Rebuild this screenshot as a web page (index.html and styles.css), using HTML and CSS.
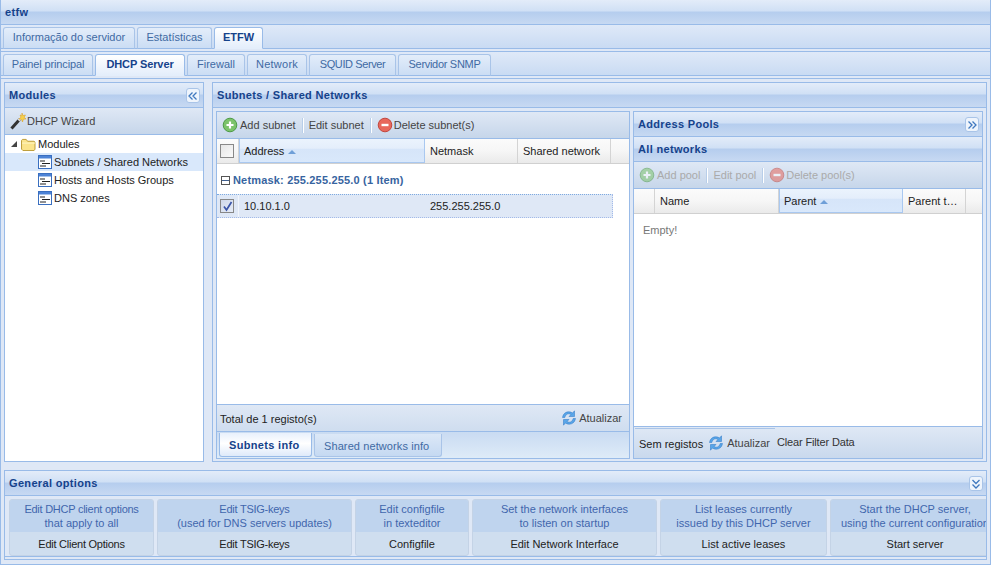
FILE: index.html
```html
<!DOCTYPE html>
<html lang="en">
<head>
    <meta charset="UTF-8">
    <title>etfw</title>
    <link rel="stylesheet" href="styles.css">
</head>
<body>
    <svg class="defs" width="0" height="0">
        <symbol id="i-add" viewBox="0 0 16 16">
            <circle cx="8" cy="8" r="6.8" fill="#7cc36b" stroke="#4e9a48"/>
            <path d="M8 4.500v7M4.500 8h7" stroke="#fff" stroke-width="2.200"/>
        </symbol>
        <symbol id="i-del" viewBox="0 0 16 16">
            <circle cx="8" cy="8" r="6.8" fill="#e8685c" stroke="#c2473e"/>
            <path d="M4.500 8h7" stroke="#fff" stroke-width="2.400"/>
        </symbol>
        <symbol id="i-refresh" viewBox="0 0 16 16">
            <path d="M1.500 7.500C2 3.800 4.800 1.800 7.800 1.800c1.500 0 2.700.4 3.700 1.200L13.500.8V6.500H8l2-2C9.300 4 8.600 3.800 7.800 3.800 5.800 3.800 4.300 5.200 3.800 7.500z" fill="#5aa6e8" stroke="#2a74c4" stroke-width=".5"/>
            <path d="M14.500 8.500c-.5 3.700-3.300 5.700-6.300 5.700-1.500 0-2.700-.4-3.700-1.200L2.500 15.200V9.500H8l-2 2c.7.500 1.400.7 2.200.7 2 0 3.500-1.400 4-3.700z" fill="#5aa6e8" stroke="#2a74c4" stroke-width=".5"/>
        </symbol>
        <symbol id="i-list" viewBox="0 0 14 14">
            <rect x=".5" y=".5" width="13" height="13" fill="#fff" stroke="#3a6fc0"/>
            <rect x="1" y="1" width="12" height="2.500" fill="#4d83d6"/>
            <path d="M2 6h5M4 8.500h8M2 11h6" stroke="#222" stroke-width="1"/>
        </symbol>
    </svg>

    <header class="app-title">etfw</header>

    <nav class="tabs tabs-top">
        <a class="tab t-info">Informação do servidor</a>
        <a class="tab t-stats">Estatísticas</a>
        <a class="tab active t-etfw">ETFW</a>
    </nav>
    <nav class="tabs tabs-sub">
        <a class="tab t-painel">Painel principal</a>
        <a class="tab active t-dhcp">DHCP Server</a>
        <a class="tab t-firewall">Firewall</a>
        <a class="tab t-network">Network</a>
        <a class="tab t-squid">SQUID Server</a>
        <a class="tab t-snmp">Servidor SNMP</a>
    </nav>
    <div class="tab-rule"></div>

    <main class="main">
        <section class="panel modules">
            <div class="panel-title">Modules
                <button class="tool"><svg width="10" height="8" viewBox="0 0 10 8"><path d="M4.500 .5L1 4l3.500 3.500M8.500 .5L5 4l3.500 3.500" fill="none" stroke="#3f78bf" stroke-width="1.300"/></svg></button>
            </div>
            <div class="toolbar wizard">
                <svg width="17" height="18" viewBox="0 0 17 18"><path d="M1.500 16.500L10 7" stroke="#333" stroke-width="3"/><path d="M8.500 8.500L10.500 6.500" stroke="#ddd" stroke-width="3"/><path d="M12 1l.8 2.500L15.500 3l-1.400 2.200L16 7l-2.600.2L12.500 10l-1-2.600L9 7l2-1.800L10 3l1.800.4z" fill="#f7d04a" stroke="#d89a1c" stroke-width=".5"/></svg>
                <span>DHCP Wizard</span>
            </div>
            <ul class="tree">
                <li class="tree-root">
                    <i class="tree-arrow"></i>
                    <svg width="15" height="13" viewBox="0 0 16 14"><path d="M.5 12V2.500l1-1h4l1.500 2h7l1 1V12l-1 1.500h-12z" fill="#fbe48c" stroke="#b8962e"/><path d="M1 5.500h14" stroke="#fff6c8"/></svg>
                    Modules
                </li>
                <li class="selected"><svg width="14" height="14"><use href="#i-list"/></svg>Subnets / Shared Networks</li>
                <li><svg width="14" height="14"><use href="#i-list"/></svg>Hosts and Hosts Groups</li>
                <li><svg width="14" height="14"><use href="#i-list"/></svg>DNS zones</li>
            </ul>
        </section>

        <section class="panel subnets">
            <div class="panel-title">Subnets / Shared Networks</div>
            <div class="subnets-body">
                <div class="inner grid-side">
                    <div class="toolbar">
                        <svg width="16" height="16"><use href="#i-add"/></svg><span>Add subnet</span>
                        <i class="sep"></i><span>Edit subnet</span>
                        <i class="sep"></i>
                        <svg class="del" width="16" height="16"><use href="#i-del"/></svg><span>Delete subnet(s)</span>
                    </div>
                    <div class="grid-head">
                        <div class="col col-check"><i class="check"></i></div>
                        <div class="col col-address sorted">Address <i class="sort"></i></div>
                        <div class="col col-netmask">Netmask</div>
                        <div class="col col-shared">Shared network</div>
                        <div class="col col-rest"></div>
                    </div>
                    <div class="grid-body">
                        <div class="group"><i class="minus"></i>Netmask: 255.255.255.0 (1 Item)</div>
                        <div class="row">
                            <div class="cell col-check"><i class="check checked"><svg width="11" height="11" viewBox="0 0 11 11"><path d="M2 5.500L4.500 9L9.500 1" fill="none" stroke="#3b55a8" stroke-width="1.700"/></svg></i></div>
                            <div class="cell col-address">10.10.1.0</div>
                            <div class="cell col-netmask">255.255.255.0</div>
                        </div>
                    </div>
                    <div class="toolbar grid-foot">
                        <span class="dark total">Total de 1 registo(s)</span>
                        <span class="spring"></span>
                        <svg width="16" height="16"><use href="#i-refresh"/></svg><span>Atualizar</span>
                    </div>
                    <div class="tabs tabs-bottom">
                        <a class="tab active">Subnets info</a>
                        <a class="tab">Shared networks info</a>
                    </div>
                </div>

                <div class="inner pools">
                    <div class="panel-title">Address Pools
                        <button class="tool"><svg width="10" height="8" viewBox="0 0 10 8"><path d="M1.500 .5L5 4L1.500 7.500M5.500 .5L9 4L5.500 7.500" fill="none" stroke="#3f78bf" stroke-width="1.300"/></svg></button>
                    </div>
                    <div class="panel-title">All networks</div>
                    <div class="toolbar disabled">
                        <svg width="16" height="16"><use href="#i-add"/></svg><span>Add pool</span>
                        <i class="sep"></i><span>Edit pool</span>
                        <i class="sep"></i>
                        <svg class="del" width="16" height="16"><use href="#i-del"/></svg><span>Delete pool(s)</span>
                    </div>
                    <div class="grid-head">
                        <div class="col pool-check"></div>
                        <div class="col pool-name">Name</div>
                        <div class="col pool-parent sorted">Parent <i class="sort"></i></div>
                        <div class="col pool-type">Parent t…</div>
                        <div class="col col-rest"></div>
                    </div>
                    <div class="grid-body"><p class="empty">Empty!</p></div>
                    <div class="toolbar pool-foot">
                        <span class="dark">Sem registos</span>
                        <svg width="16" height="16"><use href="#i-refresh"/></svg><span>Atualizar</span>
                        <span class="clear">Clear Filter Data</span>
                    </div>
                </div>
            </div>
        </section>
    </main>

    <section class="panel general">
        <div class="panel-title">General options
            <button class="tool"><svg width="8" height="10" viewBox="0 0 8 10"><path d="M.5 1L4 4.500L7.500 1M.5 5.500L4 9L7.500 5.500" fill="none" stroke="#3f78bf" stroke-width="1.300"/></svg></button>
        </div>
        <div class="actions">
            <a class="action a1"><span class="hint"><span class="tight">Edit DHCP client options</span><br>that apply to all</span><span class="label tight">Edit Client Options</span></a>
            <a class="action a2"><span class="hint"><span class="tight">Edit TSIG-keys</span><br>(used for DNS servers updates)</span><span class="label tight">Edit TSIG-keys</span></a>
            <a class="action a3"><span class="hint">Edit configfile<br>in texteditor</span><span class="label">Configfile</span></a>
            <a class="action a4"><span class="hint">Set the network interfaces<br>to listen on startup</span><span class="label">Edit Network Interface</span></a>
            <a class="action a5"><span class="hint">List leases currently<br>issued by this DHCP server</span><span class="label">List active leases</span></a>
            <a class="action a6"><span class="hint">Start the DHCP server,<br>using the current configuration</span><span class="label">Start server</span></a>
        </div>
    </section>
</body>
</html>
```

FILE: styles.css
```css
* {
    box-sizing: border-box;
}

html, body {
    margin: 0;
    height: 565px;
    overflow: hidden;
}

body {
    background: #dfe8f6;
    border: 1px solid #99bbe8;
    border-top: 0;
    font-family: "Liberation Sans", Arial, sans-serif;
    font-size: 11px;
    color: #333;
    display: flex;
    flex-direction: column;
}

.defs {
    position: absolute;
}

.tight {
    letter-spacing: -.25px;
}

/* titles */
.app-title, .panel-title {
    position: relative;
    flex: none;
    height: 25px;
    padding-left: 4px;
    font-weight: bold;
    letter-spacing: .33px;
    color: #15428b;
    background: linear-gradient(#e3ecf9 0, #d0e0f5 46%, #b5cdee 50%, #c7d9f2 100%);
    border-bottom: 1px solid #99bbe8;
    display: flex;
    align-items: center;
}

.tool {
    position: absolute;
    right: 3px;
    top: 5px;
    width: 14px;
    height: 15px;
    padding: 0;
    background: #eef4fc;
    border: 1px solid #a9c4e8;
    border-radius: 3px;
    display: flex;
    align-items: center;
    justify-content: center;
}

/* tabs */
.tabs {
    display: flex;
    align-items: flex-end;
    gap: 2px;
    background: linear-gradient(#dfe9f8, #c9dbf3);
    padding: 0 2px;
    flex: none;
}

.tabs-top {
    height: 24px;
    border-bottom: 1px solid #99bbe8;
}

.tabs-sub {
    height: 25px;
    margin-top: 2px;
    border-top: 1px solid #99bbe8;
    border-bottom: 1px solid #99bbe8;
}

.tab-rule {
    height: 1px;
    margin-top: 2px;
    flex: none;
    background: #99bbe8;
}

.tab {
    height: 22px;
    padding-bottom: 3px;
    margin-bottom: -1px;
    color: #416aa3;
    background: linear-gradient(#e3edfa, #cbddf4);
    border: 1px solid #a9c4e8;
    border-bottom: 1px solid #99bbe8;
    border-radius: 3px 3px 0 0;
    display: flex;
    align-items: center;
    justify-content: center;
}

.tab.active {
    font-weight: bold;
    color: #15428b;
    background: linear-gradient(#fff, #e4eefb);
    border-color: #99bbe8;
    border-bottom-color: #e4eefb;
}

.t-info {
    width: 132px;
}

.t-stats {
    width: 75px;
}

.t-etfw {
    width: 49px;
}

.t-painel {
    width: 90px;
    letter-spacing: -.13px;
}

.t-dhcp {
    width: 90px;
    letter-spacing: -.1px;
}

.t-firewall {
    width: 58px;
}

.t-network {
    width: 60px;
    letter-spacing: .25px;
}

.t-squid {
    width: 87px;
    letter-spacing: -.4px;
}

.t-snmp {
    width: 93px;
    letter-spacing: -.3px;
}

/* main panels */
.main {
    height: 380px;
    margin: 3px 3px 0;
    display: flex;
    flex: none;
    gap: 8px;
}

.panel {
    border: 1px solid #99bbe8;
    display: flex;
    flex-direction: column;
}

.modules {
    width: 200px;
}

.toolbar {
    position: relative;
    height: 27px;
    flex: none;
    padding: 0 5px;
    display: flex;
    align-items: center;
    gap: 2px;
    color: #444;
    background: linear-gradient(#dfe8f5, #c6d6ea);
    border-bottom: 1px solid #99bbe8;
}

.toolbar.disabled {
    color: #aaa;
}

.toolbar.disabled svg {
    opacity: .55;
}

.wizard {
    padding-left: 5px;
    gap: 0;
}

.sep {
    width: 2px;
    height: 15px;
    margin: 0 3px 0 4px;
    background: #fff;
    border-left: 1px solid #b8cee9;
}

.del {
    margin-right: -1px;
}

.tree {
    list-style: none;
    margin: 0;
    padding: 0;
    background: #fff;
    flex: 1;
}

.tree li {
    height: 18px;
    padding-left: 33px;
    display: flex;
    align-items: center;
    gap: 2px;
    color: #222;
}

.tree li.tree-root {
    padding-left: 6px;
    gap: 2px;
}

.tree li.selected {
    background: #d9e8fb;
}

.tree-arrow {
    width: 0;
    height: 0;
    margin-right: 2px;
    border-left: 6px solid transparent;
    border-bottom: 6px solid #444;
}

.subnets {
    width: 775px;
    background: #dfe8f6;
}

.subnets-body {
    flex: 1;
    padding: 3px 3px 2px;
    display: flex;
    gap: 3px;
    min-height: 0;
}

.inner {
    border: 1px solid #99bbe8;
    display: flex;
    flex-direction: column;
}

.grid-side {
    width: 414px;
}

.pools {
    width: 350px;
}

/* grids */
.grid-head {
    height: 25px;
    flex: none;
    display: flex;
    background: linear-gradient(#fbfbfb 0, #f6f6f6 50%, #eaeaea 100%);
    border-bottom: 1px solid #d0d0d0;
    color: #222;
}

.col {
    display: flex;
    align-items: center;
    padding-left: 5px;
    border-right: 1px solid #d4d4d4;
    gap: 4px;
}

.col-check {
    width: 22px;
    flex: none;
    padding-left: 3px;
}

.col-address {
    width: 186px;
    flex: none;
}

.col-netmask {
    width: 93px;
    flex: none;
}

.col-shared {
    width: 93px;
    flex: none;
}

.col-rest {
    flex: 1;
    border-right: 0;
}

.sorted {
    padding-left: 4px;
    background: linear-gradient(#ebf3fd 0, #e4eefb 40%, #d6e5f9 45%, #d9e8fb 100%);
    border-left: 1px solid #a9c8f0;
    border-right: 1px solid #a9c8f0;
    border-bottom: 1px solid #a9c8f0;
}

.sort {
    width: 0;
    height: 0;
    margin-top: 2px;
    border-left: 4px solid transparent;
    border-right: 4px solid transparent;
    border-bottom: 4px solid #6f9fd8;
}

.check {
    width: 14px;
    height: 14px;
    display: block;
    background: linear-gradient(135deg, #e6e6e6, #fafafa);
    border: 1px solid #888;
}

.check.checked {
    background: linear-gradient(135deg, #cfd8ea, #e6ecf6);
}

.check svg {
    display: block;
    margin: 1px 0 0 1px;
}

.grid-body {
    flex: 1;
    background: #fff;
    min-height: 0;
}

.group {
    height: 30px;
    padding: 2px 0 0 4px;
    display: flex;
    align-items: center;
    gap: 3px;
    font-weight: bold;
    letter-spacing: .18px;
    color: #3764a0;
}

.minus {
    width: 9px;
    height: 9px;
    border: 1px solid #555;
    background: linear-gradient(#fff 40%, #3f5f8f 40%, #3f5f8f 60%, #fff 60%);
}

.row {
    width: 396px;
    height: 24px;
    display: flex;
    background: #dfe8f6;
    border-top: 1px dotted #7eaae0;
    border-bottom: 1px dotted #a3bae9;
    border-right: 1px dotted #a3bae9;
    color: #222;
}

.cell {
    display: flex;
    align-items: center;
    padding-left: 5px;
}

.row .col-check {
    padding-left: 3px;
    border-right: 1px solid #f2f6fc;
}

.grid-foot {
    height: 28px;
    padding: 0 7px 0 3px;
    border-top: 1px solid #99bbe8;
    background: linear-gradient(#dfe8f5, #cfddef);
}

.dark {
    color: #222;
}

.total {
    margin-top: 2px;
}

.spring {
    flex: 1;
}

.tabs-bottom {
    height: 26px;
    align-items: flex-start;
    padding: 2px 2px 0;
    background: linear-gradient(#c9dbf2, #deebf8);
}

.tabs-bottom .tab {
    width: 128px;
    height: 23px;
    margin: 0;
    padding: 1px 0 0 9px;
    justify-content: flex-start;
    letter-spacing: .1px;
    border-color: #a9c4e8;
    border-top: 0;
    border-radius: 0 0 3px 3px;
    background: linear-gradient(#dce8f7, #c5d9f2);
}

.tabs-bottom .tab.active {
    width: 93px;
    margin-top: -1px;
    height: 24px;
    background: linear-gradient(#e8f0fc, #fff 45%, #dfeafa);
    letter-spacing: .33px;
    border-color: #99bbe8;
}

.pool-check {
    width: 21px;
}

.pool-name {
    width: 124px;
}

.pool-parent {
    width: 124px;
}

.pool-type {
    width: 63px;
}

.pools .col {
    flex: none;
}

.pools .col-rest {
    flex: 1;
}

.empty {
    margin: 10px 0 0 9px;
    color: #777;
}

.pool-foot {
    height: 32px;
    padding-left: 5px;
    border-top: 1px solid #99bbe8;
    border-bottom: 0;
    gap: 3px;
    background: linear-gradient(#dfe8f5, #c9d9ed);
}

/* short line above the paging part of the bar */
.pool-foot::before {
    content: "";
    position: absolute;
    left: 1px;
    top: 1px;
    width: 140px;
    height: 1px;
    background: #a9c4e8;
}

.pool-foot .dark {
    margin: 2px 2px 0 0;
}

.clear {
    margin: -2px 0 0 4px;
    letter-spacing: -.15px;
    color: #333;
}

/* general options */
.general {
    height: 90px;
    margin: 8px 3px 0;
    overflow: hidden;
    flex: none;
}

.actions {
    display: flex;
    gap: 3px;
    height: 61px;
    padding: 3px 0 0 4px;
    border-bottom: 1px solid #99bbe8;
}

.action {
    flex: none;
    height: 57px;
    border: 1px solid #c4d3e6;
    border-radius: 3px;
    display: flex;
    flex-direction: column;
    text-align: center;
    white-space: nowrap;
    background: #cfdeef;
    overflow: hidden;
}

.hint {
    height: 32px;
    padding-top: 2px;
    line-height: 14px;
    color: #3f66ad;
    background: #bfd4ee;
}

.label {
    flex: 1;
    display: flex;
    align-items: center;
    justify-content: center;
    color: #222;
}

.a1 {
    width: 145px;
}

.a2 {
    width: 195px;
}

.a3 {
    width: 114px;
}

.a4 {
    width: 185px;
}

.a5 {
    width: 167px;
}

.a6 {
    width: 170px;
}
```
